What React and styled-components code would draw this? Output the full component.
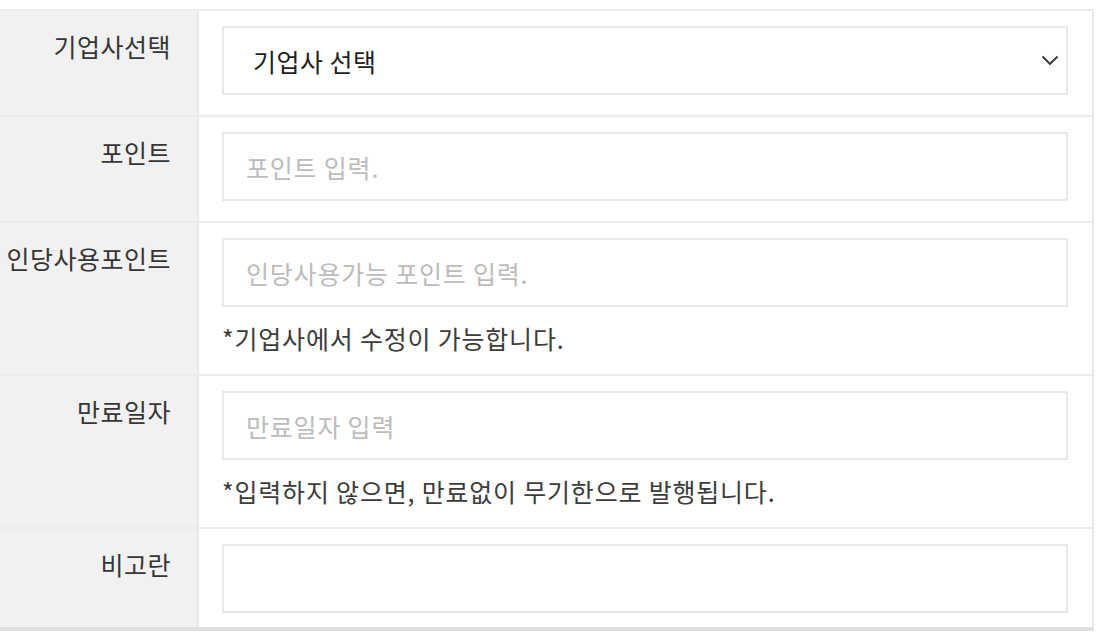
import styled, { createGlobalStyle } from 'styled-components';

const GlobalStyle = createGlobalStyle`
  body {
    margin: 0;
    background: #fff;
    font-family: "Noto Sans CJK KR", "Noto Sans", sans-serif;
  }
`;

const Page = styled.div`
  padding-top: 9px;
`;

const Table = styled.div`
  width: 1094px;
  border-top: 2px solid #ececec;
  border-right: 2px solid #e8e8e8;
  border-bottom: 4px solid #dedede;
  box-sizing: border-box;
`;

const Row = styled.div`
  display: grid;
  grid-template-columns: 199px 1fr;
  border-top: ${(p) => (p.first ? 'none' : '2px solid #ececec')};
`;

const Label = styled.div`
  background: #f1f1f1;
  border-right: 2px solid #e9e9e9;
  text-align: right;
  padding: 19px 26px 0 0;
  font-size: 25px;
  line-height: 32px;
  color: #363636;
  letter-spacing: 0.5px;
`;

const Cell = styled.div`
  padding: 15px 24px ${(p) => (p.last ? '14px' : '20px')} 23px;
  display: flex;
  flex-direction: column;
`;

const Field = styled.div`
  height: 69px;
  border: 2px solid #e8e8e8;
  box-sizing: border-box;
  display: flex;
  align-items: center;
  padding: 0 ${(p) => (p.select ? '7px 0 29px' : '22px 0 22px')};
  font-size: 25px;
  letter-spacing: ${(p) => (p.select ? '0.5px' : '0.8px')};
  color: ${(p) => (p.select ? '#1e1e1e' : '#bcbcbc')};
  justify-content: space-between;
`;

const Note = styled.div`
  margin-top: 15px;
  font-size: 25px;
  line-height: 32px;
  color: #3c3c3c;
  letter-spacing: 0.8px;
`;

const Chevron = () => (
  <svg width="18" height="11" viewBox="0 0 18 11">
    <path d="M1.5 1.5 L9 9 L16.5 1.5" fill="none" stroke="#333" strokeWidth="1.8" />
  </svg>
);

const rows = [
  { label: '기업사선택', select: '기업사 선택' },
  { label: '포인트', placeholder: '포인트 입력.' },
  { label: '인당사용포인트', placeholder: '인당사용가능 포인트 입력.', note: '*기업사에서 수정이 가능합니다.' },
  { label: '만료일자', placeholder: '만료일자 입력', note: '*입력하지 않으면, 만료없이 무기한으로 발행됩니다.' },
  { label: '비고란', placeholder: '' },
];

export default function App() {
  return (
    <Page>
      <GlobalStyle />
      <Table>
        {rows.map((r, i) => (
          <Row key={r.label} first={i === 0}>
            <Label>{r.label}</Label>
            <Cell last={i === rows.length - 1}>
              {r.select ? (
                <Field select>
                  <span>{r.select}</span>
                  <Chevron />
                </Field>
              ) : (
                <Field>{r.placeholder}</Field>
              )}
              {r.note && <Note>{r.note}</Note>}
            </Cell>
          </Row>
        ))}
      </Table>
    </Page>
  );
}
